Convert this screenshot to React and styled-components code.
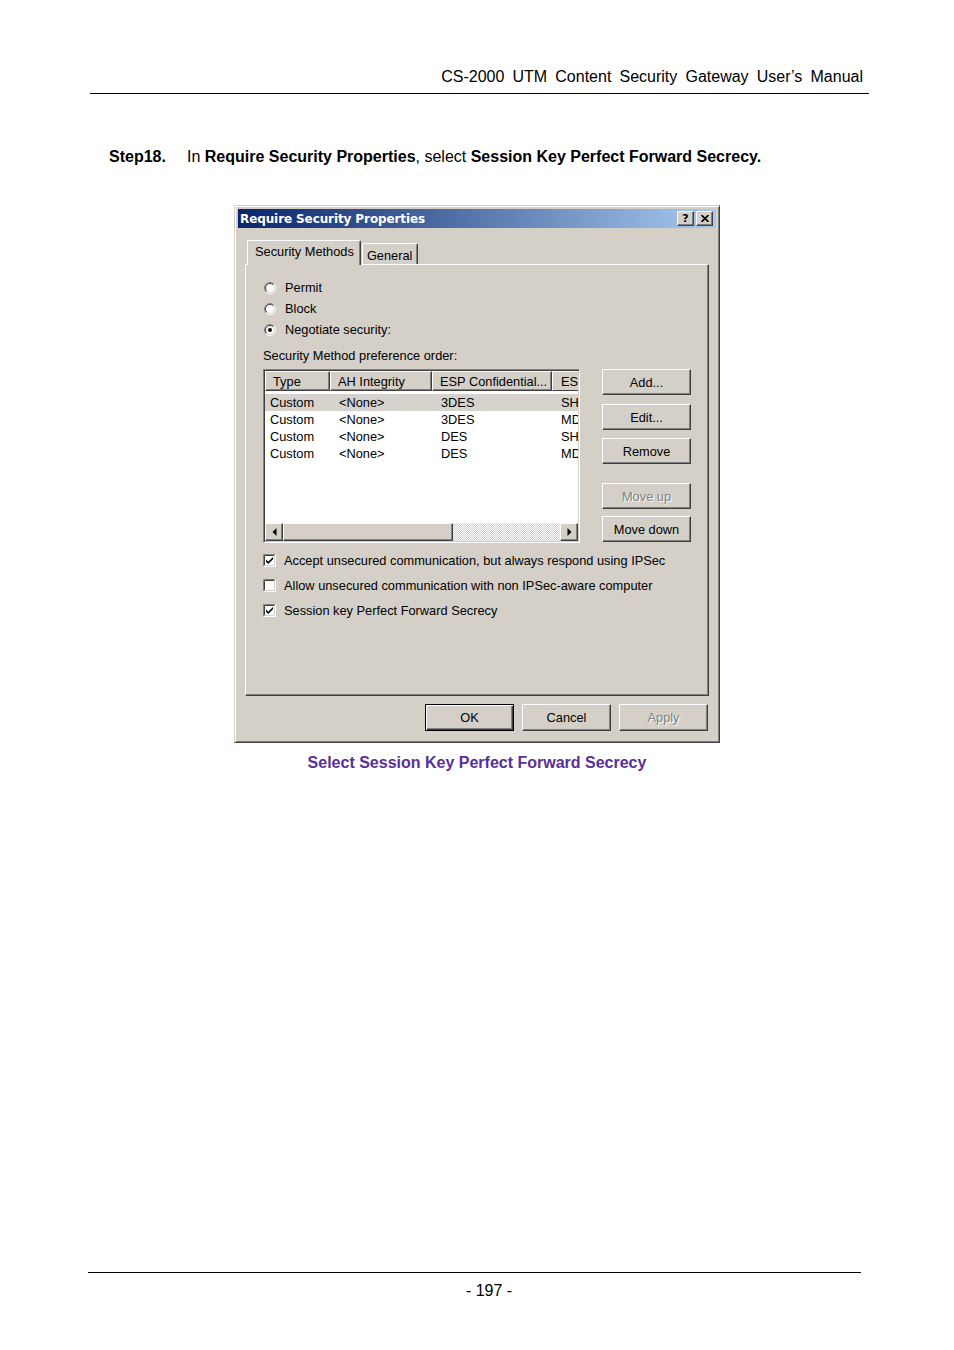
import React from "react";
import styled, { createGlobalStyle, css } from "styled-components";

const GlobalStyle = createGlobalStyle`
  body {
    margin: 0;
    background: #fff;
  }
`;

const Page = styled.div`
  width: 954px;
  min-height: 1350px;
  display: flex;
  flex-direction: column;
  font-family: "Liberation Sans", Arial, sans-serif;
  color: #000;
`;

const Header = styled.div`
  margin: 68px 85px 0 90px;
  padding: 0 6px 7px 0;
  border-bottom: 1px solid #000;
  text-align: right;
  font-size: 16px;
  line-height: 18px;
  word-spacing: 3.7px;
`;

const Step = styled.p`
  margin: 54px 0 0 109px;
  font-size: 16px;
  line-height: 18px;
`;

const StepLabel = styled.b`
  display: inline-block;
  width: 78px;
`;

const Dialog = styled.div`
  box-sizing: border-box;
  width: 486px;
  height: 538px;
  margin: 39px 0 0 234px;
  padding: 3px;
  background: #d4d0c8;
  border: 1px solid;
  border-color: #d4d0c8 #404040 #404040 #d4d0c8;
  box-shadow: inset 1px 1px #fff, inset -1px -1px #808080;
  display: flex;
  flex-direction: column;
  font-family: "Liberation Sans", Arial, sans-serif;
  font-size: 12.8px;
`;

const TitleBar = styled.div`
  height: 19px;
  flex-shrink: 0;
  display: flex;
  align-items: center;
  justify-content: space-between;
  padding: 0 3px 0 2px;
  background: linear-gradient(90deg, #0a246a, #a6caf0);
`;

const Title = styled.span`
  color: #fff;
  font-family: "DejaVu Sans", Verdana, sans-serif;
  font-weight: bold;
  font-size: 12px;
  letter-spacing: -0.1px;
`;

const TitleButtons = styled.div`
  display: flex;
  gap: 2px;
`;

const raised = css`
  background: #d4d0c8;
  border: 1px solid;
  border-color: #fff #404040 #404040 #fff;
  box-shadow: inset -1px -1px #808080;
`;

const TitleButton = styled.div`
  ${raised};
  box-sizing: border-box;
  width: 17px;
  height: 15px;
  display: flex;
  align-items: center;
  justify-content: center;
  font-family: "DejaVu Sans", Verdana, sans-serif;
  font-weight: bold;
  font-size: 11px;
`;

const Body = styled.div`
  flex: 1;
  display: flex;
  flex-direction: column;
  padding: 12px 7px 8px 7px;
`;

const Tabs = styled.div`
  display: flex;
  align-items: flex-end;
  padding-left: 2px;
  margin-bottom: -1px;
  position: relative;
  z-index: 1;
`;

const Tab = styled.div`
  box-sizing: border-box;
  background: #d4d0c8;
  border-top: 1px solid #fff;
  border-left: 1px solid #fff;
  border-right: 1px solid #404040;
  box-shadow: inset -1px 0 #808080;
  border-radius: 2px 2px 0 0;
  display: flex;
  align-items: center;
  height: ${(p) => (p.$active ? "25px" : "21px")};
  padding: ${(p) => (p.$active ? "0 6px 3px 7px" : "2px 5px 0 4px")};
  margin-bottom: ${(p) => (p.$active ? "0" : "1px")};
  margin-left: ${(p) => (p.$active ? "0" : "1px")};
`;

const Panel = styled.div`
  flex: 1;
  border: 1px solid;
  border-color: #fff #404040 #404040 #fff;
  box-shadow: inset -1px -1px #808080;
  padding: 12px 0 0 18px;
  display: flex;
  flex-direction: column;
`;

const OptionRow = styled.label`
  display: flex;
  align-items: center;
  height: ${(p) => p.$h || 21}px;
  gap: ${(p) => p.$gap || 9}px;
`;

const Caption = styled.div`
  margin: 8px 0 0 -1px;
  line-height: 16px;
`;

const ListArea = styled.div`
  display: flex;
  gap: 22px;
  margin: 5px 0 0 -1px;
  align-items: flex-start;
`;

const ListBox = styled.div`
  box-sizing: border-box;
  width: 317px;
  height: 174px;
  padding: 1px;
  background: #fff;
  border: 1px solid;
  border-color: #808080 #fff #fff #808080;
  box-shadow: inset 1px 1px #404040, inset -1px -1px #d4d0c8;
  display: flex;
  flex-direction: column;
  overflow: hidden;
`;

const ListContent = styled.div`
  flex: 1;
  overflow: hidden;
`;

const Grid = styled.div`
  display: grid;
  grid-template-columns: 65px 102px 120px 26px;
  width: 313px;
`;

const HeadCell = styled.div`
  ${raised};
  height: 20px;
  box-sizing: border-box;
  display: flex;
  align-items: center;
  padding-left: 7px;
  white-space: nowrap;
  overflow: hidden;
`;

const LastHead = styled(HeadCell)`
  padding-left: 8px;
  border-right: none;
  box-shadow: none;
`;

const Rows = styled.div`
  padding-top: 3px;
`;

const Row = styled(Grid)`
  height: 17px;
  align-items: center;
  background: ${(p) => (p.$selected ? "#d6d3ce" : "transparent")};
`;

const Cell = styled.div`
  padding-left: 9px;
  white-space: nowrap;
  overflow: hidden;
  &:first-child {
    padding-left: 5px;
  }
  &:last-child {
    padding-left: 9px;
  }
`;

const ScrollBar = styled.div`
  display: flex;
  height: 18px;
  flex-shrink: 0;
`;

const ScrollBtn = styled.div`
  ${raised};
  box-sizing: border-box;
  width: 18px;
  height: 18px;
  display: flex;
  align-items: center;
  justify-content: center;
`;

const Thumb = styled.div`
  ${raised};
  box-sizing: border-box;
  width: 170px;
  height: 18px;
`;

const Track = styled.div`
  flex: 1;
  background-color: #fff;
  background-image: repeating-conic-gradient(#d4d0c8 0 25%, #fff 0 50%);
  background-size: 2px 2px;
`;

const ButtonStack = styled.div`
  display: flex;
  flex-direction: column;
`;

const Button = styled.button`
  ${raised};
  box-sizing: border-box;
  width: 89px;
  height: ${(p) => p.$h || 26}px;
  margin-top: ${(p) => p.$mt || 0}px;
  padding: 0;
  font-family: inherit;
  font-size: 12.8px;
  color: #000;
  ${(p) =>
    p.disabled &&
    css`
      color: #808080;
      text-shadow: 1px 1px #fff;
    `}
  ${(p) =>
    p.$default &&
    css`
      border-color: #000;
      box-shadow: inset 1px 1px #fff, inset -1px -1px #404040,
        inset -2px -2px #808080;
    `}
`;

const Checks = styled.div`
  margin: 5px 0 0 -1px;
  display: flex;
  flex-direction: column;
`;

const Footer = styled.div`
  display: flex;
  justify-content: flex-end;
  gap: 8px;
  margin-top: 8px;
  padding-right: 1px;
`;

const FigureCaption = styled.div`
  margin-top: 11px;
  text-align: center;
  font-weight: bold;
  font-size: 16px;
  line-height: 18px;
  color: #5a2f98;
`;

const PageFooter = styled.div`
  margin: auto 93px 0 88px;
  border-top: 1px solid #000;
  padding: 9px 0 50px 29px;
  text-align: center;
  font-size: 16px;
  line-height: 18px;
`;

function Radio({ checked }) {
  return (
    <svg width="12" height="12" viewBox="0 0 12 12">
      <circle cx="6" cy="6" r="5" fill="#fff" />
      <path d="M2.1 9.9 A5.5 5.5 0 0 1 9.9 2.1" fill="none" stroke="#808080" />
      <path d="M2.8 9.2 A4.5 4.5 0 0 1 9.2 2.8" fill="none" stroke="#404040" />
      <path d="M9.9 2.1 A5.5 5.5 0 0 1 2.1 9.9" fill="none" stroke="#fff" />
      <path d="M9.2 2.8 A4.5 4.5 0 0 1 2.8 9.2" fill="none" stroke="#d4d0c8" />
      {checked && <circle cx="6" cy="6" r="2" fill="#000" />}
    </svg>
  );
}

function Check({ checked }) {
  return (
    <svg width="13" height="13" viewBox="0 0 13 13">
      <rect x="0" y="0" width="13" height="13" fill="#fff" />
      <path d="M0.5 12.5 V0.5 H12.5" fill="none" stroke="#808080" />
      <path d="M1.5 11.5 V1.5 H11.5" fill="none" stroke="#404040" />
      <path d="M0.5 12.5 H12.5 V0.5" fill="none" stroke="#fff" />
      <path d="M1.5 11.5 H11.5 V1.5" fill="none" stroke="#d4d0c8" />
      {checked && (
        <path d="M3 5.5 L5.2 7.8 L10 3 L10 5.2 L5.2 10 L3 7.7 Z" fill="#000" />
      )}
    </svg>
  );
}

function Arrow({ dir }) {
  return (
    <svg width="5" height="8" viewBox="0 0 5 8">
      {dir === "left" ? (
        <path d="M4.5 0 L0.5 4 L4.5 8 Z" fill="#000" />
      ) : (
        <path d="M0.5 0 L4.5 4 L0.5 8 Z" fill="#000" />
      )}
    </svg>
  );
}

const rows = [
  ["Custom", "<None>", "3DES", "SH"],
  ["Custom", "<None>", "3DES", "MD"],
  ["Custom", "<None>", "DES", "SH"],
  ["Custom", "<None>", "DES", "MD"],
];

export default function App() {
  return (
    <Page>
      <GlobalStyle />
      <Header>CS-2000 UTM Content Security Gateway User’s Manual</Header>
      <Step>
        <StepLabel>Step18.</StepLabel>In <b>Require Security Properties</b>,
        select <b>Session Key Perfect Forward Secrecy.</b>
      </Step>

      <Dialog>
        <TitleBar>
          <Title>Require Security Properties</Title>
          <TitleButtons>
            <TitleButton>?</TitleButton>
            <TitleButton>
              <svg width="8" height="7" viewBox="0 0 8 7">
                <path d="M0.5 0 L7.5 7 M7.5 0 L0.5 7" stroke="#000" strokeWidth="1.6" />
              </svg>
            </TitleButton>
          </TitleButtons>
        </TitleBar>
        <Body>
          <Tabs>
            <Tab $active>Security Methods</Tab>
            <Tab>General</Tab>
          </Tabs>
          <Panel>
            <OptionRow>
              <Radio />
              Permit
            </OptionRow>
            <OptionRow>
              <Radio />
              Block
            </OptionRow>
            <OptionRow>
              <Radio checked />
              Negotiate security:
            </OptionRow>
            <Caption>Security Method preference order:</Caption>
            <ListArea>
              <ListBox>
                <ListContent>
                  <Grid>
                    <HeadCell>Type</HeadCell>
                    <HeadCell>AH Integrity</HeadCell>
                    <HeadCell>ESP Confidential...</HeadCell>
                    <LastHead>ES</LastHead>
                  </Grid>
                  <Rows>
                    {rows.map((r, i) => (
                      <Row key={i} $selected={i === 0}>
                        {r.map((c, j) => (
                          <Cell key={j}>{c}</Cell>
                        ))}
                      </Row>
                    ))}
                  </Rows>
                </ListContent>
                <ScrollBar>
                  <ScrollBtn>
                    <Arrow dir="left" />
                  </ScrollBtn>
                  <Thumb />
                  <Track />
                  <ScrollBtn>
                    <Arrow dir="right" />
                  </ScrollBtn>
                </ScrollBar>
              </ListBox>
              <ButtonStack>
                <Button>Add...</Button>
                <Button $mt={9}>Edit...</Button>
                <Button $mt={8}>Remove</Button>
                <Button $mt={19} disabled>
                  Move up
                </Button>
                <Button $mt={7}>Move down</Button>
              </ButtonStack>
            </ListArea>
            <Checks>
              <OptionRow $h={25} $gap={8}>
                <Check checked />
                Accept unsecured communication, but always respond using IPSec
              </OptionRow>
              <OptionRow $h={25} $gap={8}>
                <Check />
                Allow unsecured communication with non IPSec-aware computer
              </OptionRow>
              <OptionRow $h={25} $gap={8}>
                <Check checked />
                Session key Perfect Forward Secrecy
              </OptionRow>
            </Checks>
          </Panel>
          <Footer>
            <Button $h={27} $default>
              OK
            </Button>
            <Button $h={27}>Cancel</Button>
            <Button $h={27} disabled>
              Apply
            </Button>
          </Footer>
        </Body>
      </Dialog>

      <FigureCaption>Select Session Key Perfect Forward Secrecy</FigureCaption>
      <PageFooter>- 197 -</PageFooter>
    </Page>
  );
}
